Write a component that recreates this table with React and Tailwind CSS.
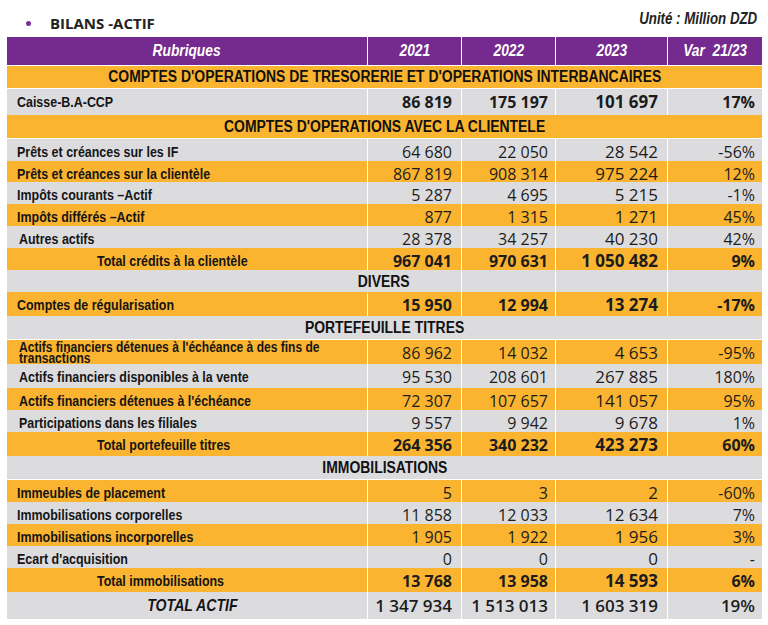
// App.jsx — Bilans actif
import React from 'react';

const sans = "font-['Liberation_Sans',Arial,sans-serif]";
const num = "font-['Open_Sans',sans-serif]";

const ORANGE = 'bg-[#fbb42f]';
const GRAY = 'bg-[#dcdcdf]';

// texte condensé (Arial Narrow n'est pas dispo) -> Liberation Sans resserré
function Narrow({ children, origin = 'origin-left', scale = 'scale-x-[0.83]', className = '' }) {
  return <span className={`inline-block whitespace-nowrap ${origin} ${scale} ${className}`}>{children}</span>;
}

const rows = [
  { kind: 'section', label: "COMPTES D'OPERATIONS DE TRESORERIE ET D'OPERATIONS INTERBANCAIRES", bg: ORANGE, h: 'h-[22px]' },
  { label: 'Caisse-B.A-CCP', bg: GRAY, h: 'h-[25px]', bold: true, v: ['86 819', '175 197', '101 697', '17%'] },
  { kind: 'section', label: "COMPTES D'OPERATIONS AVEC LA CLIENTELE", bg: ORANGE, h: 'h-[23px]' },
  { label: 'Prêts et créances sur les IF', bg: GRAY, h: 'h-[21px]', v: ['64 680', '22 050', '28 542', '-56%'] },
  { label: 'Prêts et créances sur la clientèle', bg: ORANGE, h: 'h-[20px]', v: ['867 819', '908 314', '975 224', '12%'] },
  { label: 'Impôts courants –Actif', bg: GRAY, h: 'h-[21px]', v: ['5 287', '4 695', '5 215', '-1%'] },
  { label: 'Impôts différés –Actif', bg: ORANGE, h: 'h-[21px]', v: ['877', '1 315', '1 271', '45%'] },
  { label: 'Autres actifs', bg: GRAY, h: 'h-[21px]', pl: 'pl-[12px]', v: ['28 378', '34 257', '40 230', '42%'] },
  { label: 'Total crédits à la clientèle', bg: ORANGE, h: 'h-[21px]', bold: true, total: true, v: ['967 041', '970 631', '1 050 482', '9%'] },
  { kind: 'divers', label: 'DIVERS', bg: GRAY, h: 'h-[21px]' },
  { label: 'Comptes de régularisation', bg: ORANGE, h: 'h-[23px]', bold: true, v: ['15 950', '12 994', '13 274', '-17%'] },
  { kind: 'section', label: 'PORTEFEUILLE TITRES', bg: GRAY, h: 'h-[23px]' },
  { label: ["Actifs financiers détenues à l'échéance à des fins de", 'transactions'], bg: ORANGE, h: 'h-[23px]', pl: 'pl-[12px]', two: true, v: ['86 962', '14 032', '4 653', '-95%'] },
  { label: 'Actifs financiers disponibles à la vente', bg: GRAY, h: 'h-[23px]', pl: 'pl-[12px]', v: ['95 530', '208 601', '267 885', '180%'] },
  { label: "Actifs financiers détenues à l'échéance", bg: ORANGE, h: 'h-[21px]', pl: 'pl-[12px]', v: ['72 307', '107 657', '141 057', '95%'] },
  { label: 'Participations dans les filiales', bg: GRAY, h: 'h-[21px]', pl: 'pl-[12px]', v: ['9 557', '9 942', '9 678', '1%'] },
  { label: 'Total portefeuille titres', bg: ORANGE, h: 'h-[23px]', bold: true, total: true, v: ['264 356', '340 232', '423 273', '60%'] },
  { kind: 'section', label: 'IMMOBILISATIONS', bg: GRAY, h: 'h-[23px]' },
  { label: 'Immeubles de placement', bg: ORANGE, h: 'h-[21px]', v: ['5', '3', '2', '-60%'] },
  { label: 'Immobilisations corporelles', bg: GRAY, h: 'h-[21px]', v: ['11 858', '12 033', '12 634', '7%'] },
  { label: 'Immobilisations incorporelles', bg: ORANGE, h: 'h-[21px]', v: ['1 905', '1 922', '1 956', '3%'] },
  { label: "Ecart d'acquisition", bg: GRAY, h: 'h-[21px]', v: ['0', '0', '0', '-'] },
  { label: 'Total immobilisations', bg: ORANGE, h: 'h-[23px]', bold: true, total: true, v: ['13 768', '13 958', '14 593', '6%'] },
  { kind: 'grand', label: 'TOTAL ACTIF', bg: GRAY, h: 'h-[27px]', v: ['1 347 934', '1 513 013', '1 603 319', '19%'] },
];

const cols = 'grid grid-cols-[360px_93px_93px_111px_94px] gap-x-px';
const pads = ['pr-[9px]', 'pr-[7px]', 'pr-[9px]', 'pr-[7px]'];

function Row({ r }) {
  if (r.kind === 'section') {
    return (
      <div className={`${r.h} ${r.bg} flex items-center justify-center ${sans} font-bold text-[16px] text-[#111]`}>
        <Narrow origin="origin-center" scale="scale-x-[0.87]">{r.label}</Narrow>
      </div>
    );
  }
  if (r.kind === 'divers') {
    return (
      <div className={`${cols} ${r.h}`}>
        <div className={`col-span-2 ${r.bg} flex items-center justify-end pr-[51px] ${sans} font-bold text-[16px] text-[#111]`}>
          <Narrow origin="origin-right" scale="scale-x-[0.87]">{r.label}</Narrow>
        </div>
        <div className={r.bg} />
        <div className={r.bg} />
        <div className={r.bg} />
      </div>
    );
  }

  const grand = r.kind === 'grand';
  const weight = grand ? 'font-semibold' : r.bold ? 'font-bold' : 'font-normal';

  return (
    <div className={`${cols} ${r.h}`}>
      <div
        className={`${r.bg} flex items-center ${grand ? 'justify-center' : ''} ${r.total ? 'pl-[90px]' : r.pl || 'pl-[10px]'} ${sans} font-bold ${grand ? 'italic text-[17px]' : 'text-[15px]'} text-[#151515]`}
      >
        {r.two ? (
          <Narrow className="leading-[11px] text-[14.5px] pt-[1px]">
            {r.label[0]}
            <br />
            {r.label[1]}
          </Narrow>
        ) : (
          <Narrow origin={grand ? 'origin-center' : 'origin-left'}>{r.label}</Narrow>
        )}
      </div>
      {r.v.map((val, i) => (
        <div
          key={i}
          className={`${r.bg} flex items-center justify-end ${pads[i]} ${num} ${weight} ${i === 2 || grand ? 'text-[17px]' : 'text-[16px]'} text-[#1c1c1c] whitespace-nowrap`}
        >
          {val}
        </div>
      ))}
    </div>
  );
}

export default function App() {
  return (
    <div className="w-[768px] h-[625px] bg-white overflow-hidden">
      {/* titre + unité */}
      <div className="h-[37px] flex items-start justify-between">
        <div className="flex items-center pt-[12px] pl-[26px]">
          <span className="w-[5px] h-[5px] rounded-full bg-[#7a2d93]" />
          <span className="ml-[19px] font-['Open_Sans',sans-serif] font-bold text-[15px] text-[#222]">BILANS -ACTIF</span>
        </div>
        <div className={`pt-[7px] pr-[11px] ${sans} font-bold italic text-[16px] text-[#222]`}>
          <Narrow origin="origin-right">Unité : Million DZD</Narrow>
        </div>
      </div>

      {/* tableau */}
      <div className="ml-[7px] w-[755px] flex flex-col gap-y-px">
        <div className={`${cols} h-[28px]`}>
          {['Rubriques', '2021', '2022', '2023', 'Var  21/23'].map((t) => (
            <div
              key={t}
              className={`bg-[#742a8e] flex items-center justify-center ${sans} font-bold italic text-[16px] text-white whitespace-pre`}
            >
              <Narrow origin="origin-center" scale="scale-x-[0.86]" className="whitespace-pre">{t}</Narrow>
            </div>
          ))}
        </div>
        {rows.map((r, i) => (
          <Row key={i} r={r} />
        ))}
      </div>
    </div>
  );
}
